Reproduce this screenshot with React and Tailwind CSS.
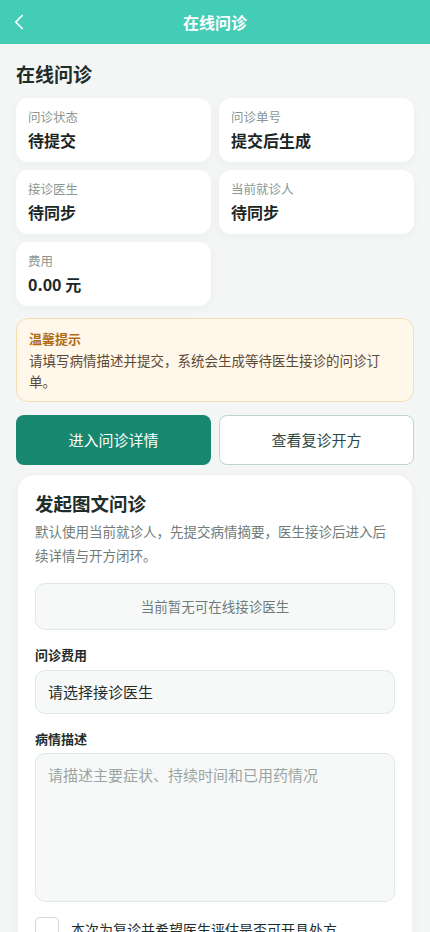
import { ChevronLeft } from "lucide-react";

const infos = [
  ["问诊状态", "待提交"],
  ["问诊单号", "提交后生成"],
  ["接诊医生", "待同步"],
  ["当前就诊人", "待同步"],
  ["费用", "0.00 元"],
];

export default function App() {
  return (
    <div
      className="min-h-screen bg-[#f4f6f6] text-[#1f2d2a]"
      style={{ fontFamily: '"Noto Sans CJK SC", "Noto Sans", sans-serif' }}
    >
      <header className="relative flex h-11 items-center justify-center bg-[#44cdb6]">
        <ChevronLeft size={26} strokeWidth={1.6} className="absolute left-[6px] top-[9px] text-white" />
        <h1 className="text-[16px] font-bold text-white">在线问诊</h1>
      </header>

      <main className="px-4 pb-10">
        <h2 className="pt-[17px] text-[19px] font-bold leading-[26px] text-[#1f2d2a]">在线问诊</h2>

        <div className="mt-[11px] grid grid-cols-2 gap-x-2 gap-y-2">
          {infos.map(([label, value]) => (
            <div key={label} className="h-16 rounded-xl bg-white px-[12px] pt-[10px] shadow-[0_2px_8px_rgba(30,60,55,0.04)]">
              <p className="text-[12.5px] leading-[18px] text-[#8a9794]">{label}</p>
              <p className="mt-[3px] text-[16px] font-bold leading-[22px] text-[#1c2725]">{value}</p>
            </div>
          ))}
        </div>

        <div className="mt-[12px] rounded-xl border border-[#f3dfb4] bg-[#fff7ea] px-[12px] pb-[9px] pt-[11px]">
          <p className="text-[13px] font-bold leading-[18px] text-[#b36b12]">温馨提示</p>
          <p className="mt-[2px] text-[13.5px] leading-[21px] text-[#5c4a36]">
            请填写病情描述并提交，系统会生成等待医生接诊的问诊订单。
          </p>
        </div>

        <div className="mt-[13px] grid grid-cols-2 gap-2">
          <button className="h-[50px] rounded-lg bg-[#17876f] text-[15px] text-white">进入问诊详情</button>
          <button className="h-[50px] rounded-lg border border-[#bcd5cf] bg-white text-[15px] text-[#2d4a44]">查看复诊开方</button>
        </div>

        <section className="mx-[2px] mt-[10px] rounded-2xl bg-white px-[17px] pb-6 pt-[15px] shadow-[0_2px_10px_rgba(30,60,55,0.05)]">
          <h3 className="text-[18.5px] font-bold leading-[26px] text-[#1f2d2a]">发起图文问诊</h3>
          <p className="mt-[3px] text-[13.5px] leading-[24px] text-[#6f7c79]">
            默认使用当前就诊人，先提交病情摘要，医生接诊后进入后续详情与开方闭环。
          </p>

          <div className="mt-[16px] flex h-[47px] items-center justify-center rounded-[10px] border border-[#dde8e6] bg-[#f7f9f9] text-[13.5px] text-[#6f7c79]">
            当前暂无可在线接诊医生
          </div>

          <p className="mt-[16px] text-[13px] font-bold leading-[18px] text-[#1f2d2a]">问诊费用</p>
          <div className="mt-[6px] flex h-[44px] items-center rounded-[10px] border border-[#dde8e6] bg-[#f7f9f9] px-[12px] text-[15px] text-[#1f2d2a]">
            请选择接诊医生
          </div>

          <p className="mt-[16px] text-[13px] font-bold leading-[18px] text-[#1f2d2a]">病情描述</p>
          <textarea
            className="mt-[5px] block h-[149px] w-full resize-none rounded-[10px] border border-[#dde8e6] bg-[#f7f9f9] px-[12px] pt-[10px] text-[15px] text-[#1f2d2a] placeholder:text-[#9aa5a3] outline-none"
            placeholder="请描述主要症状、持续时间和已用药情况"
          />

          <label className="mt-[15px] flex items-start gap-[12px]">
            <span className="h-[24px] w-[24px] shrink-0 rounded-[5px] border border-[#cfd9d7] bg-white" />
            <span className="pt-[2px] text-[14px] leading-[20px] text-[#1f2d2a]">本次为复诊并希望医生评估是否可开具处方</span>
          </label>
        </section>
      </main>
    </div>
  );
}
